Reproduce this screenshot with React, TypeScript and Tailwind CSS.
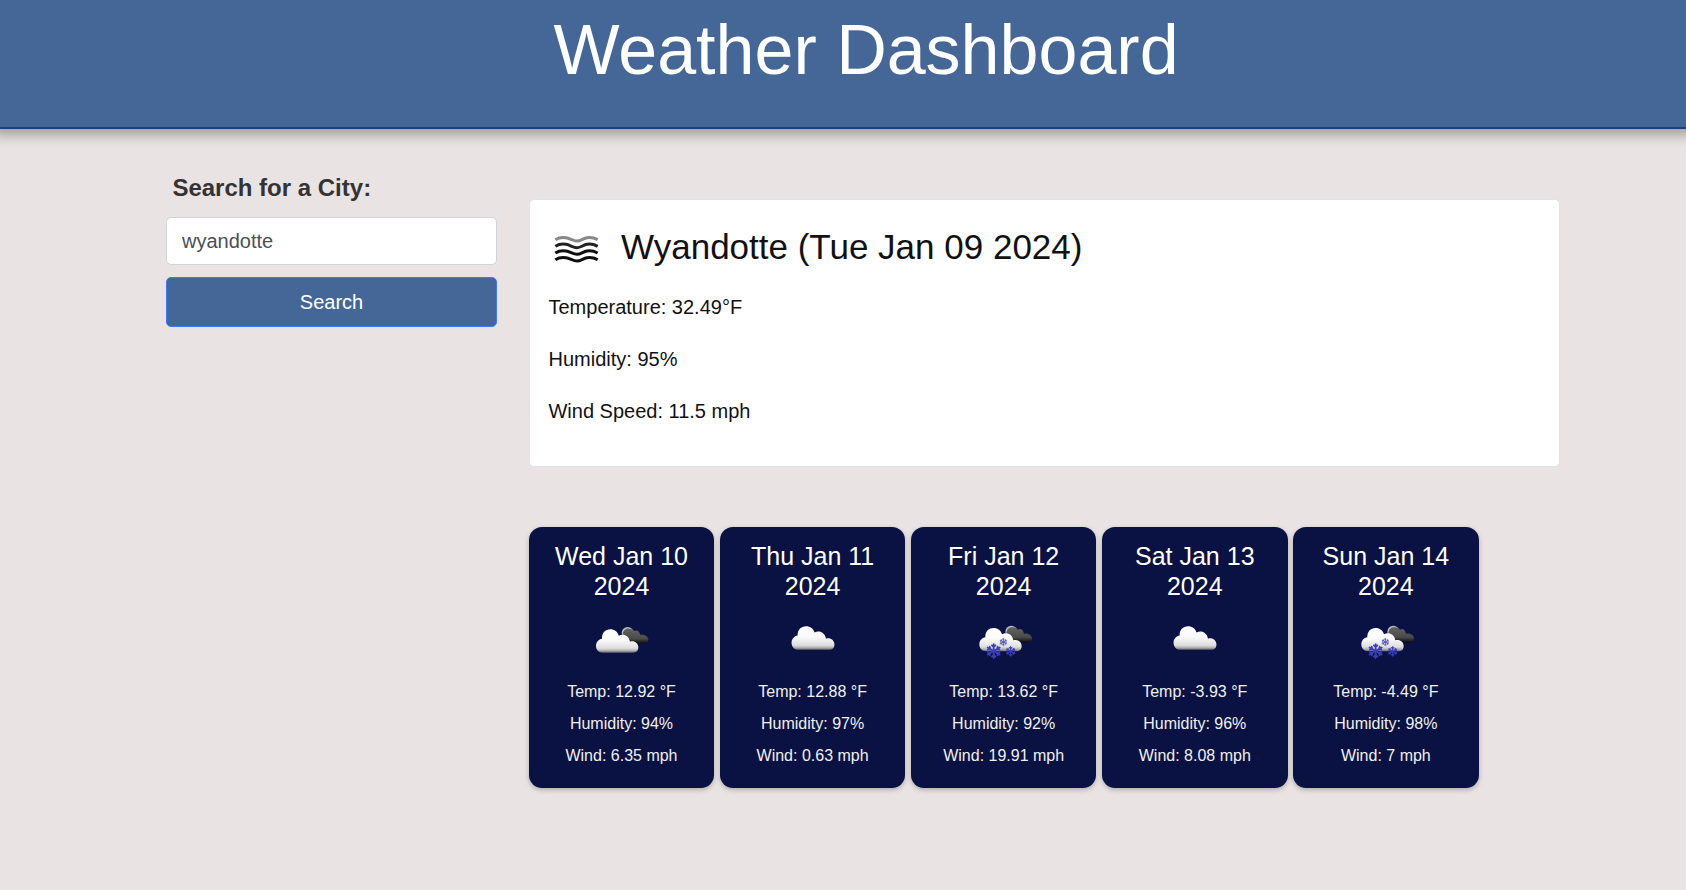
import React, { useId } from "react";

type Sky = "broken" | "cloud" | "snow";

interface Day {
  date: string;
  sky: Sky;
  temp: string;
  humidity: string;
  wind: string;
}

const days: Day[] = [
  { date: "Wed Jan 10 2024", sky: "broken", temp: "12.92", humidity: "94", wind: "6.35" },
  { date: "Thu Jan 11 2024", sky: "cloud", temp: "12.88", humidity: "97", wind: "0.63" },
  { date: "Fri Jan 12 2024", sky: "snow", temp: "13.62", humidity: "92", wind: "19.91" },
  { date: "Sat Jan 13 2024", sky: "cloud", temp: "-3.93", humidity: "96", wind: "8.08" },
  { date: "Sun Jan 14 2024", sky: "snow", temp: "-4.49", humidity: "98", wind: "7" },
];

function Flake({ x, y, r, opacity = 1 }: { x: number; y: number; r: number; opacity?: number }) {
  return (
    <g transform={`translate(${x} ${y}) scale(${r / 20})`} stroke="#3a3ec0" strokeWidth="5" strokeLinecap="round" opacity={opacity}>
      {[0, 60, 120, 180, 240, 300].map((a) => (
        <path key={a} transform={`rotate(${a})`} d="M0 0V-20M-5 -16L0 -11L5 -16" fill="none" />
      ))}
    </g>
  );
}

const views: Record<Sky, string> = {
  broken: "-11 0 240 150",
  cloud: "-21 10 237 148",
  snow: "-12 4 240 150",
};

function SkyIcon({ sky }: { sky: Sky }) {
  const id = useId();
  return (
    <svg className="block h-[50px] w-20" viewBox={views[sky]}>
      <defs>
        <linearGradient id={`${id}w`} gradientUnits="userSpaceOnUse" x1="0" y1="43" x2="0" y2="114">
          <stop offset="0" stopColor="#fff" />
          <stop offset="0.45" stopColor="#fafafa" />
          <stop offset="0.8" stopColor="#dedede" />
          <stop offset="0.9" stopColor="#b0b0b0" />
          <stop offset="1" stopColor="#58585c" />
        </linearGradient>
        <linearGradient id={`${id}d`} gradientUnits="userSpaceOnUse" x1="0" y1="36" x2="0" y2="86">
          <stop offset="0" stopColor="#666" />
          <stop offset="0.7" stopColor="#4a4a4a" />
          <stop offset="1" stopColor="#0a0a0a" />
        </linearGradient>
        <filter id={`${id}b`} x="-20%" y="-20%" width="140%" height="140%">
          <feGaussianBlur stdDeviation="1.2" />
        </filter>
      </defs>
      <g filter={`url(#${id}b)`}>
        {sky !== "cloud" && (
          <g transform={sky === "snow" ? "translate(1 0)" : undefined}>
            <circle cx="129" cy="54" r="18" fill="#bbb" />
            <path
              d="M114 62C114 46 124 39 133 41C141 41 147 44 149 48C157 43 165 49 167 60C179 58 190 64 191 73C192 81 186 86 178 86H130Z"
              fill={`url(#${id}d)`}
            />
          </g>
        )}
        <path
          d="M54 113C42 113 34 104 34 92C34 81 42 73 52 71C51 54 62 43 77 43C89 43 99 50 102 62C116 54 133 62 136 80C149 76 161 85 161 97C161 107 155 113 145 113Z"
          fill={`url(#${id}w)`}
        />
      </g>
      {sky === "snow" && (
        <g filter={`url(#${id}b)`}>
          <Flake x={77} y={112} r={21} />
          <Flake x={106} y={85} r={11} opacity={0.85} />
          <Flake x={128} y={113} r={14} />
        </g>
      )}
    </svg>
  );
}

function MistIcon() {
  const wave = "C45 40 54 39 66 41C78 43 88 51 99 51C110 51 118 43 129 41C141 39 150 41 161 47";
  return (
    <svg className="block h-[50px] w-[70px] shrink-0" viewBox="0 0 210 150" fill="none" stroke="#111" strokeWidth="9">
      <defs>
        <filter id="mist">
          <feGaussianBlur stdDeviation="1.5" />
        </filter>
      </defs>
      <g filter="url(#mist)">
        <path d={`M34 47${wave}`} stroke="#888" />
        <path transform="translate(0 20)" d={`M34 47${wave}`} stroke="#222" />
        <path transform="translate(0 40)" d={`M34 47${wave}`} />
        <path transform="translate(0 60)" d={`M34 47${wave}`} />
      </g>
    </svg>
  );
}

function ForecastCard({ day }: { day: Day }) {
  return (
    <article className="flex h-[261px] w-[185.6px] flex-col items-center rounded-[13px] bg-[#0a1243] px-5 pt-[14px] text-center shadow-[0_2px_5px_rgba(0,0,0,0.24)]">
      <h3 className="text-[25px] leading-[30px] text-white">{day.date}</h3>
      <div className="mt-[14px]">
        <SkyIcon sky={day.sky} />
      </div>
      <div className="mt-[11px] text-base leading-8 whitespace-nowrap text-[#f0f0f0]">
        <p>Temp: {day.temp} °F</p>
        <p>Humidity: {day.humidity}%</p>
        <p>Wind: {day.wind} mph</p>
      </div>
    </article>
  );
}

export default function App() {
  return (
    <div className="min-h-[890px] overflow-hidden bg-[#e9e3e3] font-['Liberation_Sans',Arial,sans-serif]">
      <header className="h-[129px] border-b-2 border-[#1c3f77] bg-[#456798] pl-[46px] text-center shadow-[0_-2px_12px_8px_rgba(0,0,0,0.3)]">
        <h1 className="pt-[8px] text-[70px] leading-[84px] text-white">Weather Dashboard</h1>
      </header>
      <main className="flex pl-[166px]">
        <aside className="w-[331px] pt-[43px]">
          <label htmlFor="city" className="block pl-[6.4px] text-2xl leading-8 font-bold text-[#333]">
            Search for a City:
          </label>
          <input
            id="city"
            defaultValue="wyandotte"
            className="mt-[13px] block h-12 w-full rounded-[5px] border border-[#ced4da] bg-white px-[15px] text-xl text-[#495057] outline-none"
          />
          <button className="mt-3 block h-[50px] w-full rounded-[5px] border border-[#3b7bf5] bg-[#456798] text-xl text-white">
            Search
          </button>
        </aside>
        <div className="ml-[31.7px]">
          <section className="mt-[70px] ml-[0.3px] h-[268px] w-[1031px] rounded-[5px] border border-[#dfe2e8] bg-white pl-[18.5px] text-[#111]">
            <div className="-ml-[4px] flex h-[74px] items-end">
              <MistIcon />
              <h2 className="mb-px ml-[6.5px] text-[35px] leading-[52px] whitespace-nowrap">Wyandotte (Tue Jan 09 2024)</h2>
            </div>
            <div className="mt-[7px] text-xl leading-[52px]">
              <p>Temperature: 32.49°F</p>
              <p>Humidity: 95%</p>
              <p>Wind Speed: 11.5 mph</p>
            </div>
          </section>
          <section className="mt-[60px] flex gap-[5.5px]">
            {days.map((day) => (
              <ForecastCard key={day.date} day={day} />
            ))}
          </section>
        </div>
      </main>
    </div>
  );
}
